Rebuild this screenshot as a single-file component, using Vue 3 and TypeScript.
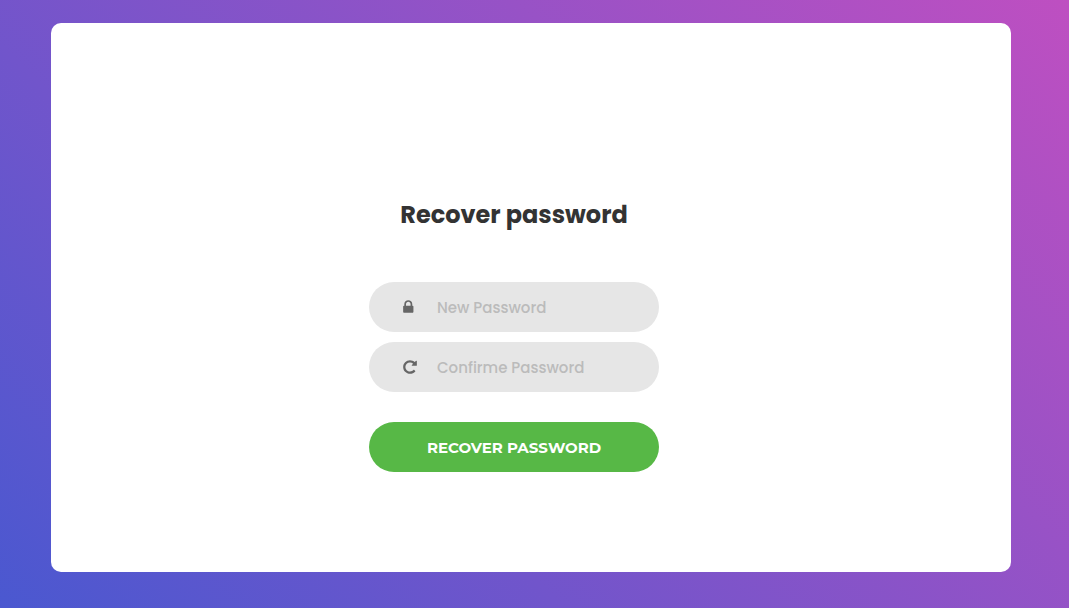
<script setup lang="ts">
import { ref } from 'vue'

const newPassword = ref('')
const confirmation = ref('')
</script>

<template>
  <main class="page">
    <section class="card">
      <form class="form" @submit.prevent>
        <h1 class="title">Recover password</h1>
        <div class="field">
          <input v-model="newPassword" class="input" type="password" placeholder="New Password" aria-label="New Password" />
          <svg class="icon" viewBox="0 -1536 1536 1792" aria-hidden="true">
            <path
              transform="scale(1 -1)"
              d="M320 768h512v192q0 106-75 181t-181 75-181-75-75-181V768zm832-96V96q0-40-28-68t-68-28H96Q56 0 28 28T0 96v576q0 40 28 68t68 28h32v192q0 184 132 316t316 132 316-132 132-316V768h32q40 0 68-28t28-68z"
              fill-rule="evenodd"
            />
          </svg>
        </div>
        <div class="field">
          <input v-model="confirmation" class="input" type="password" placeholder="Confirme Password" aria-label="Confirme Password" />
          <svg class="icon" viewBox="0 -1536 1536 1792" aria-hidden="true">
            <path
              transform="scale(1 -1)"
              d="M1536 1280V832q0-26-19-45t-45-19h-448q-42 0-59 40-17 39 14 69l138 138Q969 1152 768 1152q-104 0-198.5-40.5T406 1002 296.5 838.5 256 640t40.5-198.5T406 278t163.5-109.5T768 128q119 0 225 52t179 147q7 10 23 12 15 0 25-9l137-138q9-8 9.5-20.5T1359 149q-109-132-264-204.5T768-128q-156 0-298 61T225 98 61 342 0 640t61 298 164 245 245 164 298 61q147 0 284.5-55.5T1295 1196l130 129q29 31 70 14 41-17 41-59z"
            />
          </svg>
        </div>
        <button class="submit" type="submit">RECOVER PASSWORD</button>
      </form>
    </section>
  </main>
</template>

<style>
body {
  margin: 0;
}
</style>

<style scoped>
.page {
  box-sizing: border-box;
  min-height: 100vh;
  padding: 23px 22px 36px 15px;
  display: flex;
  justify-content: center;
  align-items: flex-start;
  background: linear-gradient(-135deg, #be4fc1, #4a58d0);
  font-family: Poppins, Inter, sans-serif;
}

.card {
  box-sizing: border-box;
  width: 100%;
  max-width: 960px;
  padding: 178px 34px 100px 0;
  display: flex;
  justify-content: center;
  background: #fff;
  border-radius: 10px;
}

.form {
  width: 290px;
  display: flex;
  flex-direction: column;
}

.title {
  margin: 0 0 53px;
  font-size: 24px;
  font-weight: 700;
  line-height: 28px;
  color: #333;
  text-align: center;
}

.field {
  position: relative;
  margin-bottom: 10px;
}

.input {
  box-sizing: border-box;
  display: block;
  width: 100%;
  height: 50px;
  padding: 0 30px 0 68px;
  border: 0;
  border-radius: 25px;
  outline: none;
  background: #e6e6e6;
  color: #666;
  font-family: inherit;
  font-size: 15px;
  font-weight: 500;
}

.input::placeholder {
  color: #bbb;
  opacity: 1;
}

.icon {
  position: absolute;
  left: 34px;
  top: 17px;
  width: 14px;
  height: 16px;
  fill: #666;
}

.submit {
  height: 50px;
  margin-top: 20px;
  padding: 0 25px;
  border: 0;
  border-radius: 25px;
  background: #57b846;
  color: #fff;
  font-family: Montserrat, Inter, sans-serif;
  font-size: 15px;
  font-weight: 700;
  cursor: pointer;
}
</style>
